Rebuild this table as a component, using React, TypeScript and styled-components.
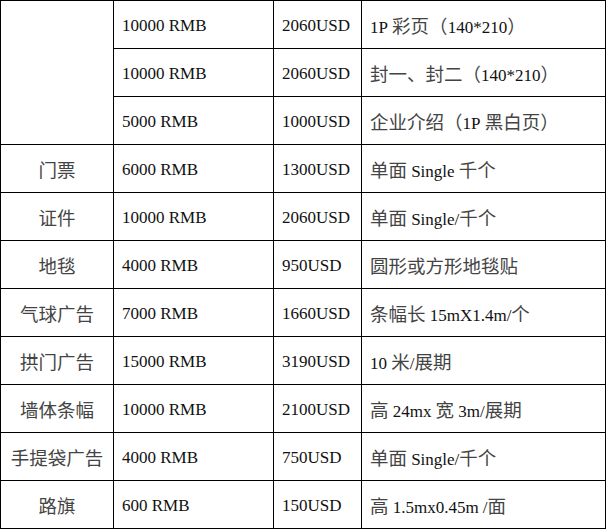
import React from "react";
import styled, { createGlobalStyle } from "styled-components";

const GlobalStyle = createGlobalStyle`
  html, body {
    margin: 0;
    padding: 0;
    background: #fff;
  }
`;

const Table = styled.table`
  border-collapse: collapse;
  table-layout: fixed;
  width: 605px;
  font-family: "Liberation Serif", "Noto Sans CJK SC", serif;
  font-size: 17px;
  color: #111;
`;

const Row = styled.tr`
  height: 48px;
`;

const Cell = styled.td<{ $center?: boolean }>`
  border: 1px solid #000;
  padding: 3px 0 0 ${(p) => (p.$center ? "0" : "8px")};
  text-align: ${(p) => (p.$center ? "center" : "left")};
  vertical-align: middle;
  line-height: 22px;
  white-space: nowrap;
  overflow: hidden;
`;

const Han = styled.span`
  font-family: "Noto Sans CJK SC", sans-serif;
  font-size: 18.5px;
  color: #444;
`;

// CJK runs (plus any spaces touching them) use the wider glyph font
const cjk = /(\s*[\u3000-\u303f\u4e00-\u9fff\uff00-\uffef]+\s*)/;

const Mixed = ({ text }: { text: string }) => (
  <>
    {text
      .split(cjk)
      .filter(Boolean)
      .map((part, i) => (cjk.test(part) ? <Han key={i}>{part}</Han> : <span key={i}>{part}</span>))}
  </>
);

const rows: [string, string, string, string][] = [
  ["", "10000 RMB", "2060USD", "1P 彩页（140*210）"],
  ["", "10000 RMB", "2060USD", "封一、封二（140*210）"],
  ["", "5000 RMB", "1000USD", "企业介绍（1P 黑白页）"],
  ["门票", "6000 RMB", "1300USD", "单面 Single 千个"],
  ["证件", "10000 RMB", "2060USD", "单面 Single/千个"],
  ["地毯", "4000 RMB", "950USD", "圆形或方形地毯贴"],
  ["气球广告", "7000 RMB", "1660USD", "条幅长 15mX1.4m/个"],
  ["拱门广告", "15000 RMB", "3190USD", "10 米/展期"],
  ["墙体条幅", "10000 RMB", "2100USD", "高 24mx 宽 3m/展期"],
  ["手提袋广告", "4000 RMB", "750USD", "单面 Single/千个"],
  ["路旗", "600 RMB", "150USD", "高 1.5mx0.45m /面"],
];

export default function App() {
  return (
    <>
      <GlobalStyle />
      <Table>
        <colgroup>
          <col style={{ width: 113 }} />
          <col style={{ width: 160 }} />
          <col style={{ width: 88 }} />
          <col style={{ width: 244 }} />
        </colgroup>
        <tbody>
          {rows.map(([item, rmb, usd, note], i) => (
            <Row key={i}>
              {i === 0 && <Cell $center rowSpan={3} />}
              {i > 2 && (
                <Cell $center>
                  <Mixed text={item} />
                </Cell>
              )}
              <Cell>
                <Mixed text={rmb} />
              </Cell>
              <Cell>
                <Mixed text={usd} />
              </Cell>
              <Cell>
                <Mixed text={note} />
              </Cell>
            </Row>
          ))}
        </tbody>
      </Table>
    </>
  );
}
